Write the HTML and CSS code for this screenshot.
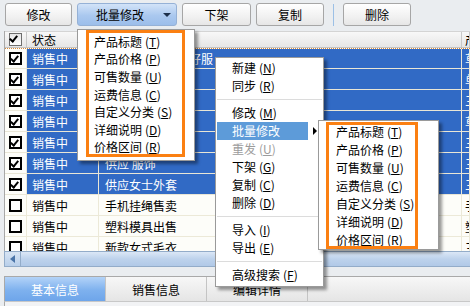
FILE: index.html
```html
<!DOCTYPE html>
<html lang="zh-CN">
<head>
    <meta charset="UTF-8">
    <title>商品管理</title>
    <link rel="stylesheet" href="styles.css">
</head>
<body>
    <div class="toolbar">
        <button class="btn w67">修改</button>
        <button class="btn btn-drop">批量修改<span class="caret"></span></button>
        <button class="btn w69">下架</button>
        <button class="btn w68">复制</button>
        <span class="tb-sep"></span>
        <button class="btn w68">删除</button>
    </div>

    <div class="grid">
        <div class="row head">
            <div class="cell c-chk"><span class="chk chk-head"></span></div>
            <div class="cell c-state">状态</div>
            <div class="cell c-name">产品名称</div>
            <div class="cell c-extra">产品分类</div>
        </div>
        <div class="grid-body">
            <div class="row sel first">
                <div class="cell c-chk"><span class="chk on"></span></div>
                <div class="cell c-state">销售中</div>
                <div class="cell c-name">秋冬新款韩版女好服</div>
                <div class="cell c-extra">草</div>
            </div>
            <div class="row sel">
                <div class="cell c-chk"><span class="chk on"></span></div>
                <div class="cell c-state">销售中</div>
                <div class="cell c-name">韩版女装</div>
                <div class="cell c-extra">单</div>
            </div>
            <div class="row sel">
                <div class="cell c-chk"><span class="chk on"></span></div>
                <div class="cell c-state">销售中</div>
                <div class="cell c-name">男士休闲裤</div>
                <div class="cell c-extra">三</div>
            </div>
            <div class="row sel">
                <div class="cell c-chk"><span class="chk on"></span></div>
                <div class="cell c-state">销售中</div>
                <div class="cell c-name">儿童玩具</div>
                <div class="cell c-extra">草</div>
            </div>
            <div class="row sel">
                <div class="cell c-chk"><span class="chk on"></span></div>
                <div class="cell c-state">销售中</div>
                <div class="cell c-name">床上用品</div>
                <div class="cell c-extra">三</div>
            </div>
            <div class="row sel">
                <div class="cell c-chk"><span class="chk on"></span></div>
                <div class="cell c-state">销售中</div>
                <div class="cell c-name">供应 服饰</div>
                <div class="cell c-extra">三</div>
            </div>
            <div class="row sel">
                <div class="cell c-chk"><span class="chk on"></span></div>
                <div class="cell c-state">销售中</div>
                <div class="cell c-name">供应女士外套</div>
                <div class="cell c-extra">三</div>
            </div>
            <div class="row">
                <div class="cell c-chk"><span class="chk"></span></div>
                <div class="cell c-state">销售中</div>
                <div class="cell c-name">手机挂绳售卖</div>
                <div class="cell c-extra">手</div>
            </div>
            <div class="row">
                <div class="cell c-chk"><span class="chk"></span></div>
                <div class="cell c-state">销售中</div>
                <div class="cell c-name">塑料模具出售</div>
                <div class="cell c-extra">塑</div>
            </div>
            <div class="row">
                <div class="cell c-chk"><span class="chk"></span></div>
                <div class="cell c-state">销售中</div>
                <div class="cell c-name">新款女式毛衣</div>
                <div class="cell c-extra">三</div>
            </div>
        </div>
    </div>

    <div class="hscroll">
        <span class="scroll-btn"><span class="arrow-left"></span></span>
    </div>

    <div class="tabs">
        <div class="tab active">基本信息</div>
        <div class="tab">销售信息</div>
        <div class="tab">编辑详情</div>
    </div>
    <div class="tab-page"></div>

    <!-- batch edit dropdown -->
    <div class="menu drop-menu">
        <div class="mi">产品标题<span class="key">(<u>T</u>)</span></div>
        <div class="mi">产品价格<span class="key">(<u>P</u>)</span></div>
        <div class="mi">可售数量<span class="key">(<u>U</u>)</span></div>
        <div class="mi">运费信息<span class="key">(<u>C</u>)</span></div>
        <div class="mi">自定义分类<span class="key">(<u>S</u>)</span></div>
        <div class="mi">详细说明<span class="key">(<u>D</u>)</span></div>
        <div class="mi">价格区间<span class="key">(<u>R</u>)</span></div>
    </div>
    <div class="mark mark-drop"></div>

    <!-- right click menu -->
    <div class="menu ctx-menu">
        <div class="mi">新建<span class="key">(<u>N</u>)</span></div>
        <div class="mi">同步<span class="key">(<u>R</u>)</span></div>
        <div class="msep"></div>
        <div class="mi">修改<span class="key">(<u>M</u>)</span></div>
        <div class="mi active"><span class="hl">批量修改</span><span class="sub-arrow"></span></div>
        <div class="mi disabled">重发<span class="key">(<u>U</u>)</span></div>
        <div class="mi">下架<span class="key">(<u>G</u>)</span></div>
        <div class="mi">复制<span class="key">(<u>C</u>)</span></div>
        <div class="mi">删除<span class="key">(<u>D</u>)</span></div>
        <div class="msep"></div>
        <div class="mi">导入<span class="key">(<u>I</u>)</span></div>
        <div class="mi">导出<span class="key">(<u>E</u>)</span></div>
        <div class="msep"></div>
        <div class="mi">高级搜索<span class="key">(<u>F</u>)</span></div>
    </div>

    <div class="menu sub-menu">
        <div class="mi">产品标题<span class="key">(<u>T</u>)</span></div>
        <div class="mi">产品价格<span class="key">(<u>P</u>)</span></div>
        <div class="mi">可售数量<span class="key">(<u>U</u>)</span></div>
        <div class="mi">运费信息<span class="key">(<u>C</u>)</span></div>
        <div class="mi">自定义分类<span class="key">(<u>S</u>)</span></div>
        <div class="mi">详细说明<span class="key">(<u>D</u>)</span></div>
        <div class="mi">价格区间<span class="key">(<u>R</u>)</span></div>
    </div>
    <div class="mark mark-sub"></div>
</body>
</html>
```

FILE: styles.css
```css
body {
    margin: 0;
    width: 470px;
    height: 306px;
    overflow: hidden;
    position: relative;
    background-color: #eaedf0;
    font-family: "Noto Sans CJK SC", "Liberation Sans", sans-serif;
    font-size: 12px;
    color: #000;
}

/* toolbar */
.toolbar {
    display: flex;
    align-items: flex-start;
    gap: 5px;
    height: 31px;
    padding: 3px 0 0 5px;
    box-sizing: border-box;
}

.btn {
    height: 23px;
    padding: 0;
    border: 1px solid #a6a6a6;
    border-radius: 3px;
    background: linear-gradient(#ffffff, #f1f1f1 60%, #e6e6e6);
    font-family: inherit;
    font-size: 12px;
    color: #000;
}

.w67 { width: 67px; }
.w68 { width: 68px; }
.w69 { width: 69px; }

.btn-drop {
    width: 100px;
    display: flex;
    align-items: center;
    justify-content: space-between;
    padding: 0 5px 0 18px;
    border-color: #95b1d6;
    background: linear-gradient(#d2e3f8, #aac8ef 55%, #9cbeea);
}

.caret {
    width: 0;
    height: 0;
    border-left: 4px solid transparent;
    border-right: 4px solid transparent;
    border-top: 4px solid #1c2f4a;
}

.tb-sep {
    width: 1px;
    height: 22px;
    margin: 1px 4px 0;
    background-color: #9cc0e6;
}

/* grid */
.grid {
    margin-left: 4px;
    border-left: 1px solid #a8a8a8;
    overflow: hidden;
}

.row {
    display: grid;
    grid-template-columns: 22px 72px 363px 1fr;
    height: 21px;
    box-sizing: border-box;
    border-bottom: 1px solid #ece9d8;
    background-color: #fdfdf9;
    white-space: nowrap;
}

.cell {
    display: flex;
    align-items: center;
    border-right: 1px solid #ece9d8;
    overflow: hidden;
}

.row.head {
    height: 17px;
    background: linear-gradient(#f8f8f8, #e6e6e6);
    border-top: 1px solid #d4d4d4;
    border-bottom: 1px solid #c4c4c4;
}

.row.head .cell {
    border-right-color: #c8c8c8;
}

.grid-body {
    height: 203px;
    overflow: hidden;
}

.row.sel .cell {
    background-color: #316ac5;
    color: #fff;
    border-right-color: #e9e6d6;
}

.row.sel {
    border-bottom-color: #e9e6d6;
}

.row.sel .c-chk {
    background-color: #fdfdf9;
    border-right-color: #ece9d8;
}

.row.first {
    border-top: 1px dotted #d88a3a;
}

.c-chk { justify-content: center; padding-right: 1px; }
.c-state { padding-left: 5px; }
.c-name { padding-left: 6px; }
.c-extra { padding-left: 3px; }

.chk {
    width: 9px;
    height: 9px;
    border: 2px solid #000;
    background-color: #fff;
    position: relative;
}

.chk.on::after,
.chk-head::after {
    content: "";
    position: absolute;
    left: 1px;
    top: 0;
    width: 3px;
    height: 6px;
    border: solid #000;
    border-width: 0 2px 2px 0;
    transform: rotate(40deg);
}

.chk-head {
    width: 11px;
    height: 11px;
    border: 1px solid #6d6d6d;
    background: linear-gradient(#e6e6e6, #ffffff);
}

/* scrollbar */
.hscroll {
    margin-left: 4px;
    height: 16px;
    box-sizing: border-box;
    border: 1px solid #93acc9;
    border-right: none;
    background: linear-gradient(#dbe7f6, #bdd2ec 50%, #b1c9e7);
    display: flex;
}

.scroll-btn {
    width: 15px;
    display: flex;
    align-items: center;
    justify-content: center;
    border-right: 1px solid #93acc9;
    background: linear-gradient(#d7e4f4, #b9cfea);
}

.arrow-left {
    width: 0;
    height: 0;
    border-top: 4px solid transparent;
    border-bottom: 4px solid transparent;
    border-right: 5px solid #4a74a8;
}

/* tabs */
.tabs {
    display: flex;
    margin: 9px 0 0 4px;
    height: 25px;
    box-sizing: border-box;
    border-top: 1px solid #a9a9a9;
    border-left: 1px solid #a9a9a9;
    background: linear-gradient(#f7f7f7, #e5e5e5);
}

.tab {
    width: 100px;
    display: flex;
    align-items: center;
    justify-content: center;
    border-right: 1px solid #c4c4c4;
    font-size: 12px;
}

.tab.active {
    background: linear-gradient(#b3d3f8, #7eb1ee 55%, #6ea5ea);
    color: #fff;
}

.tab-page {
    margin-left: 4px;
    height: 6px;
    border-top: 1px solid #c8c8c8;
    border-left: 1px solid #a9a9a9;
    background-color: #f2f3f5;
}

/* popup menus */
.menu {
    position: absolute;
    box-sizing: border-box;
    background-color: #fff;
    border: 1px solid #9a9a9a;
    box-shadow: 3px 3px 3px rgba(0, 0, 0, 0.4);
    white-space: nowrap;
}

.mi {
    height: 18px;
    line-height: 18px;
    display: flex;
    align-items: center;
}

.key {
    margin-left: 3px;
    font-size: 12px;
}

.drop-menu {
    left: 77px;
    top: 29px;
    width: 118px;
    height: 132px;
    padding: 3px 0 0 16px;
}

.drop-menu .mi {
    height: 17.6px;
}

.ctx-menu {
    left: 215px;
    top: 57px;
    width: 109px;
    height: 230px;
    padding: 1px 0;
}

.ctx-menu .mi {
    padding-left: 16px;
}

.ctx-menu .mi.active {
    padding-left: 1px;
    position: relative;
}

.ctx-menu .hl {
    width: 76px;
    padding-left: 15px;
    background-color: #5d9bd9;
    color: #fff;
}

.sub-arrow {
    position: absolute;
    right: 6px;
    top: 5px;
    width: 0;
    height: 0;
    border-top: 4px solid transparent;
    border-bottom: 4px solid transparent;
    border-left: 4px solid #000;
}

.mi.disabled {
    color: #9c9c9c;
}

.msep {
    height: 9px;
    margin: 0 1px;
    background: linear-gradient(transparent 4px, #dcdcdc 4px, #dcdcdc 5px, #fff 5px);
}

.sub-menu {
    left: 318px;
    top: 120px;
    width: 121px;
    height: 130px;
    padding: 2px 0 0 17px;
}

/* orange highlight frames */
.mark {
    position: absolute;
    box-sizing: border-box;
    border: 3px solid #fb8012;
}

.mark-drop {
    left: 86px;
    top: 30px;
    width: 99px;
    height: 127px;
}

.mark-sub {
    left: 326px;
    top: 122px;
    width: 92px;
    height: 127px;
}
```
